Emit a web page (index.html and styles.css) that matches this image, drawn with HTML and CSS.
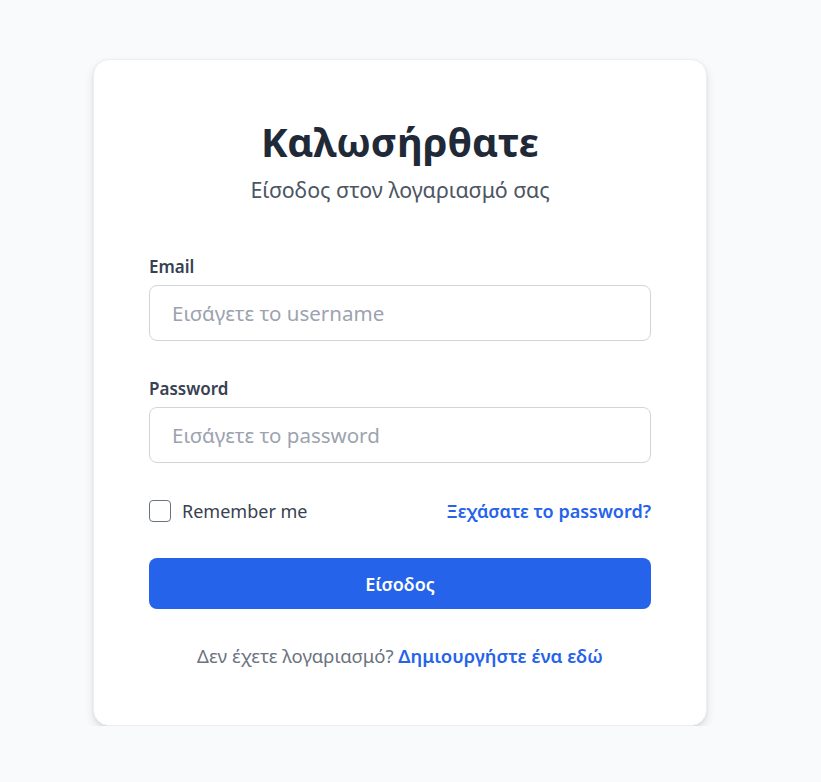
FILE: index.html
```html
<!DOCTYPE html>
<html lang="el">
<head>
<meta charset="utf-8">
<title>Login</title>
<link rel="stylesheet" href="styles.css">
</head>
<body>
<main class="page">
  <div class="card">
    <header class="head">
      <h1 class="title">Καλωσήρθατε</h1>
      <p class="subtitle">Είσοδος στον λογαριασμό σας</p>
    </header>
    <form class="form">
      <div class="field">
        <label class="label" for="email">Email</label>
        <input class="input" id="email" type="text" placeholder="Εισάγετε το username">
      </div>
      <div class="field">
        <label class="label" for="pw">Password</label>
        <input class="input" id="pw" type="password" placeholder="Εισάγετε το password">
      </div>
      <div class="row">
        <label class="remember"><span class="box"></span>Remember me</label>
        <a class="link" href="#">Ξεχάσατε το password?</a>
      </div>
      <button class="btn" type="button">Είσοδος</button>
    </form>
    <p class="foot">Δεν έχετε λογαριασμό? <a class="link" href="#">Δημιουργήστε ένα εδώ</a></p>
  </div>
</main>
</body>
</html>
```
FILE: styles.css
```css
* { box-sizing: border-box; }
html, body { margin: 0; padding: 0; }
body {
  background: #f9fafb;
  font-family: "Noto Sans", "Open Sans", sans-serif;
  color: #374151;
}
.page {
  padding: 59px 0 0 93px;
}
.card {
  width: 614px;
  background: #fff;
  border-radius: 16px;
  border: 1px solid #eceef1;
  box-shadow: 0 5px 10px rgba(0,0,0,0.10), 0 1px 3px rgba(0,0,0,0.06);
  padding: 56px 55px 57px;
}
.head { text-align: center; }
.title {
  margin: 0;
  font-size: 40px;
  line-height: 52px;
  font-weight: 700;
  color: #1f2937;
}
.subtitle {
  margin: 8px 0 0;
  font-size: 21.4px;
  line-height: 28px;
  color: #4b5563;
}
.form { margin-top: 51px; }
.field { margin-bottom: 36px; display: flex; flex-direction: column; }
.label {
  font-size: 17px;
  font-weight: 600;
  line-height: 24px;
  color: #374151;
  margin-bottom: 6px;
}
.input {
  height: 56px;
  border: 1px solid #d1d5db;
  border-radius: 8px;
  padding: 0 22px;
  font-family: inherit;
  font-size: 20.5px;
  color: #111827;
  outline: none;
}
.input::placeholder { color: #9ca3af; }
.row {
  display: flex;
  justify-content: space-between;
  align-items: center;
  margin-top: 10px;
}
.remember {
  display: flex;
  align-items: center;
  font-size: 18px;
  color: #374151;
}
.box {
  width: 22px;
  height: 22px;
  border: 1.5px solid #6b7280;
  border-radius: 4px;
  margin-right: 11px;
}
.link {
  color: #2563eb;
  font-weight: 600;
  text-decoration: none;
  font-size: 18px;
}
.btn {
  display: block;
  width: 100%;
  height: 51px;
  margin-top: 35px;
  border: 0;
  border-radius: 8px;
  background: #2563eb;
  color: #fff;
  font-family: inherit;
  font-size: 18px;
  font-weight: 600;
}
.foot {
  margin: 34px 0 0;
  text-align: center;
  font-size: 18.5px;
  color: #6b7280;
}
.foot .link { font-size: inherit; }
```
